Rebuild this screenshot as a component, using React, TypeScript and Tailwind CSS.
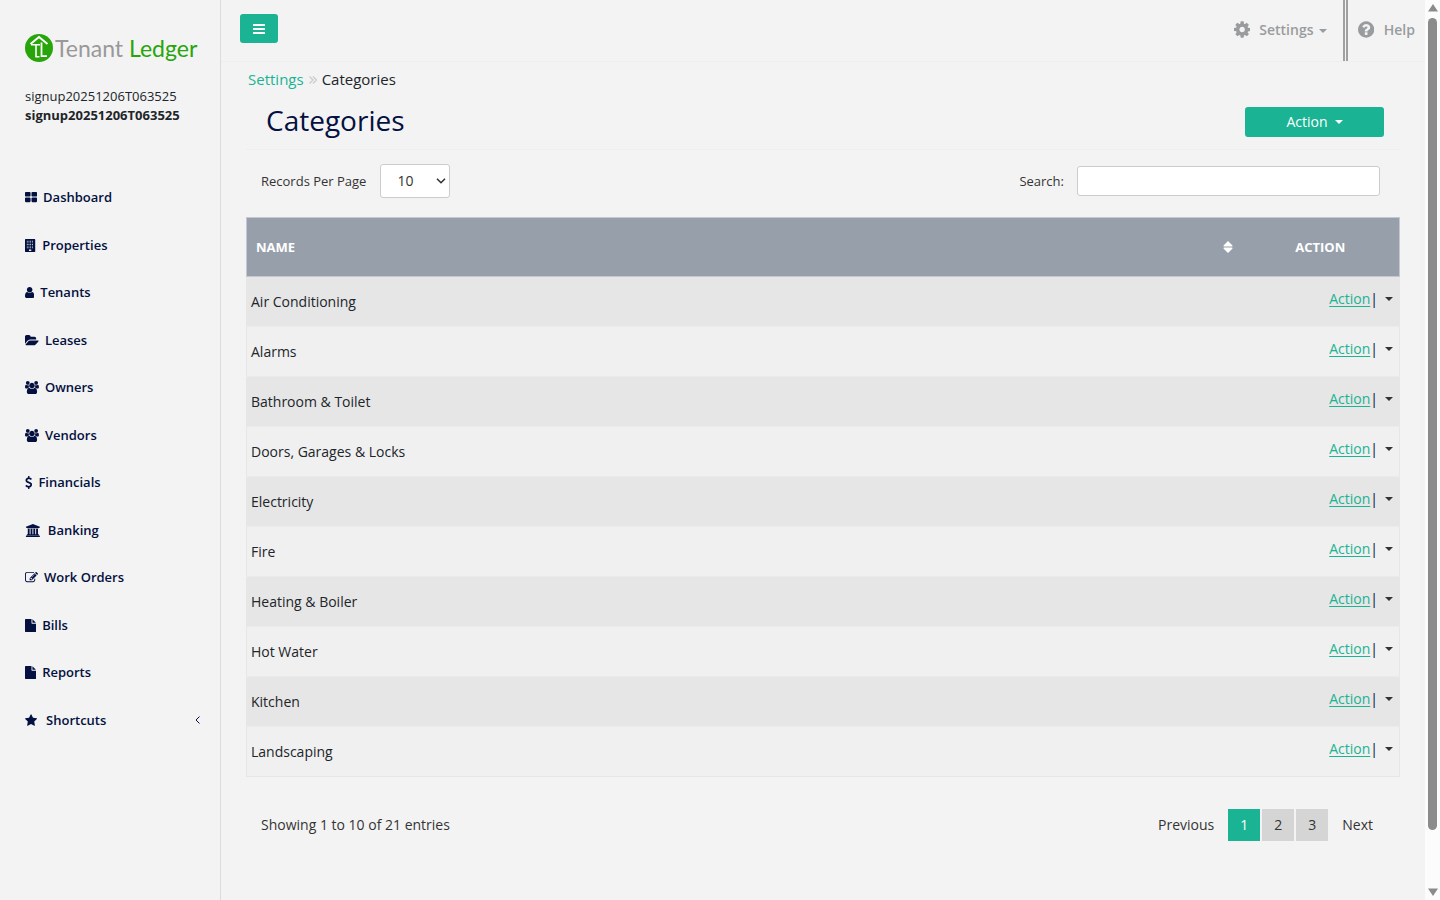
import React from 'react';

interface IconProps {
  w: number;
  d: string;
  className?: string;
}

const Icon: React.FC<IconProps> = ({ w, d, className = 'h-[13px]' }) => (
  <svg viewBox={`0 0 ${w} 1792`} className={`${className} w-auto shrink-0`} fill="currentColor" aria-hidden="true">
    <path fillRule="evenodd" d={d} />
  </svg>
);

const Caret: React.FC<{ className?: string }> = ({ className = '' }) => (
  <svg viewBox="0 0 8 4" className={`h-1 w-2 shrink-0 ${className}`} fill="currentColor" aria-hidden="true">
    <path d="M0 0h8L4 4z" />
  </svg>
);

// windows of the building icon, four columns by five rows
const windows = [256, 480, 704, 928]
  .map((x, c) => [256, 480, 704, 928, 1152].map((y) => `M${x + c * 12} ${y}h110v110h-110z`).join(''))
  .join('');

const usersPath =
  'M593 896q-162 5-265 128h-134q-82 0-138-40.5t-56-118.5q0-353 124-353 6 0 43.5 21t97.5 42.5 119 21.5q67 0 133-23-5 37-5 66 0 139 81 256zM1664 1533q0 120-73 189.5t-194 69.5h-874q-121 0-194-69.5t-73-189.5q0-53 3.5-103.5t14-109 26.5-108.5 43-97.5 62-81 85.5-53.5 111.5-20q10 0 43 21.5t73 48 107 48 135 21.5 135-21.5 107-48 73-48 43-21.5q61 0 111.5 20t85.5 53.5 62 81 43 97.5 26.5 108.5 14 109 3.5 103.5zM640 256q0 106-75 181t-181 75-181-75-75-181 75-181 181-75 181 75 75 181zM1344 640q0 159-112.5 271.5t-271.5 112.5-271.5-112.5-112.5-271.5 112.5-271.5 271.5-112.5 271.5 112.5 112.5 271.5zM1920 865q0 78-56 118.5t-138 40.5h-134q-103-123-265-128 81-117 81-256 0-29-5-66 66 23 133 23 59 0 119-21.5t97.5-42.5 43.5-21q124 0 124 353zM1792 256q0 106-75 181t-181 75-181-75-75-181 75-181 181-75 181 75 75 181z';

const filePath =
  'M1024 512v-472q22 14 36 28l408 408q14 14 28 36h-472zM896 544q0 40 28 68t68 28h544v1056q0 40-28 68t-68 28h-1344q-40 0-68-28t-28-68v-1600q0-40 28-68t68-28h800v544z';

const cogPath =
  'M1024 896q0-106-75-181t-181-75-181 75-75 181 75 181 181 75 181-75 75-181zM1536 787v222q0 12-8 23t-20 13l-185 28q-19 54-39 91 35 50 107 138 10 12 10 25t-9 23q-27 37-99 108t-94 71q-12 0-26-9l-138-108q-44 23-91 38-16 136-29 186-7 28-36 28h-222q-14 0-24.5-8.5t-11.5-21.5l-28-184q-49-16-90-37l-141 107q-10 9-25 9-14 0-25-11-126-114-165-168-7-10-7-23 0-12 8-23 15-21 51-66.5t54-70.5q-27-50-41-99l-183-27q-13-2-21-12.5t-8-23.5v-222q0-12 8-23t19-13l186-28q14-46 39-92-40-57-107-138-10-12-10-24 0-10 9-23 26-36 98.5-107.5t94.5-71.5q13 0 26 10l138 107q44-23 91-38 16-136 29-186 7-28 36-28h222q14 0 24.5 8.5t11.5 21.5l28 184q49 16 90 37l142-107q9-9 24-9 13 0 25 10 129 119 165 170 7 8 7 22 0 12-8 23-15 21-51 66.5t-54 70.5q26 50 41 98l183 28q13 2 21 12.5t8 23.5z';

const helpPath =
  'M896 1376v-192q0-14-9-23t-23-9h-192q-14 0-23 9t-9 23v192q0 14 9 23t23 9h192q14 0 23-9t9-23zM1152 704q0-88-55.5-163t-138.5-116-170-41q-243 0-371 213-15 24 8 42l132 100q7 6 19 6 16 0 25-12 53-68 86-92 34-24 86-24 48 0 85.5 26t37.5 59q0 38-20 61t-68 45q-63 28-115.5 86.5t-52.5 125.5v36q0 14 9 23t23 9h192q14 0 23-9t9-23q0-19 21.5-49.5t54.5-49.5q32-18 49-28.5t46-35 44.5-48 28-60.5 12.5-81zM1536 896q0 209-103 385.5t-279.5 279.5-385.5 103-385.5-103-279.5-279.5-103-385.5 103-385.5 279.5-279.5 385.5-103 385.5 103 279.5 279.5 103 385.5z';

const barsPath =
  'M1536 1344v128q0 26-19 45t-45 19h-1408q-26 0-45-19t-19-45v-128q0-26 19-45t45-19h1408q26 0 45 19t19 45zM1536 832v128q0 26-19 45t-45 19h-1408q-26 0-45-19t-19-45v-128q0-26 19-45t45-19h1408q26 0 45 19t19 45zM1536 320v128q0 26-19 45t-45 19h-1408q-26 0-45-19t-19-45v-128q0-26 19-45t45-19h1408q26 0 45 19t19 45z';

const menu = [
  {
    label: 'Dashboard',
    w: 1664,
    d: 'M768 1024v384q0 52-38 90t-90 38h-512q-52 0-90-38t-38-90v-384q0-52 38-90t90-38h512q52 0 90 38t38 90zM768 256v384q0 52-38 90t-90 38h-512q-52 0-90-38t-38-90v-384q0-52 38-90t90-38h512q52 0 90 38t38 90zM1664 1024v384q0 52-38 90t-90 38h-512q-52 0-90-38t-38-90v-384q0-52 38-90t90-38h512q52 0 90 38t38 90zM1664 256v384q0 52-38 90t-90 38h-512q-52 0-90-38t-38-90v-384q0-52 38-90t90-38h512q52 0 90 38t38 90z',
  },
  {
    label: 'Properties',
    w: 1536,
    d: `M64 0h1280q64 0 64 64v1664q0 64-64 64h-1280q-64 0-64-64v-1664q0-64 64-64zM544 1440h320v220h-320z${windows}`,
  },
  {
    label: 'Tenants',
    w: 1280,
    d: 'M1280 1399q0 109-62.5 187t-150.5 78h-854q-88 0-150.5-78t-62.5-187q0-85 8.5-160.5t31.5-152 58.5-131 94-89 134.5-34.5q131 128 313 128t313-128q76 0 134.5 34.5t94 89 58.5 131 31.5 152 8.5 160.5zM1024 512q0 159-112.5 271.5t-271.5 112.5-271.5-112.5-112.5-271.5 112.5-271.5 271.5-112.5 271.5 112.5 112.5 271.5z',
  },
  {
    label: 'Leases',
    w: 1920,
    d: 'M1879 952q0 31-31 66l-336 396q-43 51-120.5 86.5t-143.5 35.5h-1088q-34 0-60.5-13t-26.5-43q0-31 31-66l336-396q43-51 120.5-86.5t143.5-35.5h1088q34 0 60.5 13t26.5 43zM1536 608v160h-832q-94 0-197 47.5t-164 119.5l-337 396-5 6q0-4-.5-12.5t-.5-12.5v-960q0-92 66-158t158-66h320q92 0 158 66t66 158v32h544q92 0 158 66t66 158z',
  },
  { label: 'Owners', w: 1920, d: usersPath },
  { label: 'Vendors', w: 1920, d: usersPath },
  {
    label: 'Financials',
    w: 1024,
    d: 'M978 1185q0 153-99.5 263.5t-258.5 136.5v175q0 14-9 23t-23 9h-135q-13 0-22.5-9.5t-9.5-22.5v-175q-66-9-127.5-31t-101.5-44.5-74-48-46.5-37.5-17.5-18q-17-21-2-41l103-135q7-10 23-12 15-2 24 9l2 2q113 99 243 125 37 8 74 8 81 0 142.5-43t61.5-122q0-28-15-53t-33.5-42-58.5-37.5-66-32-80-32.5q-39-16-61.5-25t-61.5-26.5-62.5-31-56.5-35.5-53.5-42.5-43.5-49-35.5-58-21-66.5-8.5-78q0-138 98-242t255-134v-180q0-13 9.5-22.5t22.5-9.5h135q14 0 23 9t9 23v176q57 6 110.5 23t87 33.5 63.5 37.5 39 29 15 14q17 18 5 38l-81 146q-8 15-23 16-14 3-27-7-3-3-14.5-12t-39-26.5-58.5-32-74.5-26-85.5-11.5q-95 0-155 43t-60 111q0 26 8.5 48t29.5 41.5 39.5 33 56 31 60.5 27 70 27.5q53 20 81 31.5t76 35 75.5 42.5 62 50 53 63.5 31.5 76.5 13 94z',
  },
  {
    label: 'Banking',
    w: 2048,
    gap: 'gap-2',
    d: 'M1088 0l960 384v128h-128q0 26-20.5 45t-48.5 19h-1526q-28 0-48.5-19t-20.5-45h-128v-128zM384 640h256v768h128v-768h256v768h128v-768h256v768h128v-768h256v768h59q28 0 48.5 19t20.5 45v64h-1664v-64q0-26 20.5-45t48.5-19h59v-768zM1979 1600q28 0 48.5 19t20.5 45v128h-1920v-128q0-26 20.5-45t48.5-19h1782z',
  },
  {
    label: 'Work Orders',
    w: 1792,
    d: 'M888 1184l116-116-152-152-116 116v56h96v96h56zM1328 464q-16-16-33 1l-350 350q-17 17-1 33t33-1l350-350q17-17 1-33zM1408 1058v190q0 119-84.5 203.5t-203.5 84.5h-832q-119 0-203.5-84.5t-84.5-203.5v-832q0-119 84.5-203.5t203.5-84.5h832q63 0 117 25 15 7 18 23 3 17-9 29l-49 49q-14 14-32 8-23-6-45-6h-832q-66 0-113 47t-47 113v832q0 66 47 113t113 47h832q66 0 113-47t47-113v-126q0-13 9-22l64-64q15-15 35-7t20 29zM1312 320l288 288-672 672h-288v-288zM1756 452l-92 92-288-288 92-92q28-28 68-28t68 28l152 152q28 28 28 68t-28 68z',
  },
  { label: 'Bills', w: 1536, d: filePath },
  { label: 'Reports', w: 1536, d: filePath },
  {
    label: 'Shortcuts',
    w: 1664,
    gap: 'gap-[9px]',
    arrow: true,
    d: 'M1664 647q0 22-26 48l-363 354 86 500q1 7 1 20 0 21-10.5 35.5t-30.5 14.5q-19 0-40-12l-449-236-449 236q-22 12-40 12-21 0-31.5-14.5t-10.5-35.5q0-6 2-20l86-500-364-354q-25-27-25-48 0-37 56-46l502-73 225-455q19-41 49-41t49 41l225 455 502 73q56 9 56 46z',
  },
];

const categories = [
  'Air Conditioning',
  'Alarms',
  'Bathroom & Toilet',
  'Doors, Garages & Locks',
  'Electricity',
  'Fire',
  'Heating & Boiler',
  'Hot Water',
  'Kitchen',
  'Landscaping',
];

const Logo = () => (
  <a href="#" className="flex items-center" aria-label="Tenant Ledger">
    <svg viewBox="0 0 28 28" className="size-7 shrink-0" aria-hidden="true">
      <circle cx="14" cy="14" r="14" fill="#27a50b" />
      <g fill="none" stroke="#fff">
        <path d="M5.500 10 14 3l8.500 7" strokeWidth="2" />
        <path d="M6 10.700h9M11 10.700v12h3.500" strokeWidth="1.600" />
        <path d="M16.500 8.500v13.700h5.500" strokeWidth="1.800" />
      </g>
    </svg>
    <span className="ml-0.5 font-['Lato',sans-serif] text-[23px] leading-7 whitespace-nowrap text-[#999]">
      Tenant <span className="text-[#27a50b]">Ledger</span>
    </span>
  </a>
);

const Sidebar = () => (
  <aside className="w-[221px] shrink-0 border-r border-[#dcdcdc] text-[13px]">
    <div className="px-[25px] pt-[34px]">
      <Logo />
      <div className="mt-[25px] leading-[19px] text-[#212529]">
        <div>signup20251206T063525</div>
        <div className="font-bold">signup20251206T063525</div>
      </div>
    </div>
    <nav className="mt-[49px]">
      <ul>
        {menu.map((item) => (
          <li key={item.label}>
            <a
              href="#"
              className={`flex items-center py-3.5 pr-5 pl-[25px] leading-normal font-semibold text-[#031040] ${item.gap ?? 'gap-1.5'}`}
            >
              <Icon w={item.w} d={item.d} />
              {item.label}
              {item.arrow && (
                <svg viewBox="0 0 5 8" className="ml-auto h-2 w-[5px]" fill="none" stroke="currentColor" aria-hidden="true">
                  <path d="M4.5.5 1 4l3.5 3.5" />
                </svg>
              )}
            </a>
          </li>
        ))}
      </ul>
    </nav>
  </aside>
);

const TopBar = () => (
  <header className="flex h-[62px] justify-between border-b border-[#eeeeee] pl-[19px]">
    <button type="button" aria-label="Toggle menu" className="mt-3.5 flex h-[29px] w-[38px] items-center justify-center rounded-[3px] bg-[#1ab394] text-white">
      <Icon w={1536} d={barsPath} className="h-3.5" />
    </button>
    <div className="flex text-sm font-semibold text-[#999c9e]">
      <button type="button" className="flex items-center border-r-[5px] border-double border-[#a0a0a0] pr-4 pb-0.5">
        <Icon w={1536} d={cogPath} className="h-[19px]" />
        <span className="ml-[9px]">Settings</span>
        <Caret className="mt-0.5 ml-[5px]" />
      </button>
      <a href="#" className="flex items-center gap-2.5 px-2.5 pb-0.5">
        <Icon w={1536} d={helpPath} className="h-[19px]" />
        Help
      </a>
    </div>
  </header>
);

const CategoryTable = () => (
  <table className="mt-[19px] w-full border-collapse border border-[#e6e6e6] text-sm">
    <thead>
      <tr className="h-[59px] border border-[#c5c9cf] bg-[#979faa] text-[13px] text-white">
        <th className="pr-[7px] pl-[9px] text-left font-bold">
          <div className="flex items-center justify-between">
            NAME
            <svg viewBox="0 0 10 12" className="h-3 w-2.5" fill="currentColor" aria-hidden="true">
              <path d="M5 0 9.500 4.600Q9.800 5.400 9 5.400H1Q.2 5.400.5 4.600zM5 12 .5 7.400Q.2 6.600 1 6.600H9Q9.800 6.600 9.500 7.400z" />
            </svg>
          </div>
        </th>
        <th className="w-40 pl-0.5 text-center font-bold">ACTION</th>
      </tr>
    </thead>
    <tbody>
      {categories.map((name) => (
        <tr key={name} className="h-[50px] border-t border-[#ebebeb] odd:bg-[#e6e6e6] even:bg-[#f0f0f0]">
          <td className="px-1 text-[#212529]">{name}</td>
          <td className="pr-1.5 pb-[5px]">
            <div className="flex items-center justify-end">
              <a href="#" className="text-[#1ab394] underline decoration-1 underline-offset-2">
                Action
              </a>
              <span className="text-[#031040]">|</span>
              <button type="button" aria-label={`More actions for ${name}`} className="ml-[7px] text-[#333]">
                <Caret />
              </button>
            </div>
          </td>
        </tr>
      ))}
    </tbody>
  </table>
);

const Pagination = () => (
  <nav aria-label="Pages" className="flex items-center gap-0.5 text-[#333]">
    <button type="button" className="h-8 px-3">Previous</button>
    <button type="button" aria-current="page" className="size-8 bg-[#1ab394] text-white">1</button>
    <button type="button" className="size-8 bg-[#d5d5d5]">2</button>
    <button type="button" className="size-8 bg-[#d5d5d5]">3</button>
    <button type="button" className="h-8 px-3">Next</button>
  </nav>
);

const ScrollTrack = () => (
  <div className="flex w-[15px] shrink-0 flex-col items-center bg-[#fcfcfc] py-1 text-[#8b8b8b]" aria-hidden="true">
    <svg viewBox="0 0 10 8" className="h-2 w-2.5" fill="currentColor">
      <path d="M5 0 10 7.500H0z" />
    </svg>
    <div className="mt-1.5 w-[9px] flex-[808] rounded-full bg-[#8b8b8b]" />
    <div className="flex-[58]" />
    <svg viewBox="0 0 10 8" className="h-2 w-2.5" fill="currentColor">
      <path d="M0 .5h10L5 8z" />
    </svg>
  </div>
);

export default function App() {
  return (
    <div className="flex min-h-screen bg-[#f3f3f3] font-['Open_Sans',sans-serif] text-[#333]">
      <Sidebar />
      <div className="min-w-0 flex-1">
        <TopBar />
        <main className="px-[25px] text-sm">
          <div className="flex items-center pt-[7px] pl-0.5 text-[15px] leading-[21px] text-[#212529]">
            <a href="#" className="text-[#1ab394]">Settings</a>
            <svg viewBox="0 0 8 8" className="mx-[5px] size-2" fill="none" stroke="#ccc" strokeWidth="1.4" aria-hidden="true">
              <path d="M.5.5 4 4 .5 7.500M4 .5 7.500 4 4 7.500" />
            </svg>
            <span>Categories</span>
          </div>
          <div className="flex items-end justify-between border-b border-[#eeeeee] pt-[13px] pr-4 pb-3 pl-5">
            <h1 className="text-[28px] leading-[34px] text-[#031040]">Categories</h1>
            <button type="button" className="flex h-[30px] w-[139px] items-center justify-center rounded-[3px] bg-[#1ab394] text-white">
              Action
              <Caret className="ml-[7px]" />
            </button>
          </div>
          <div className="flex items-center justify-between pt-3.5 pr-5 pl-[15px] text-[13px]">
            <label className="flex items-center">
              Records Per Page
              <span className="relative ml-3.5">
                <select className="block h-[34px] w-[70px] appearance-none rounded-[3px] border border-[#ccc] bg-white pl-4 text-sm" defaultValue="10">
                  <option>10</option>
                  <option>25</option>
                  <option>50</option>
                </select>
                <svg viewBox="0 0 10 6" className="pointer-events-none absolute top-3.5 right-1 h-1.5 w-2.5" fill="none" stroke="#333" strokeWidth="1.6" aria-hidden="true">
                  <path d="M1 .7 5 4.700 9 .7" />
                </svg>
              </span>
            </label>
            <label className="flex items-center">
              Search:
              <input type="search" className="ml-[13px] h-[30px] w-[303px] rounded-[3px] border border-[#ccc] bg-white px-2" />
            </label>
          </div>
          <CategoryTable />
          <div className="flex items-center justify-between px-[15px] pt-8">
            <p>Showing 1 to 10 of 21 entries</p>
            <Pagination />
          </div>
        </main>
      </div>
      <ScrollTrack />
    </div>
  );
}
